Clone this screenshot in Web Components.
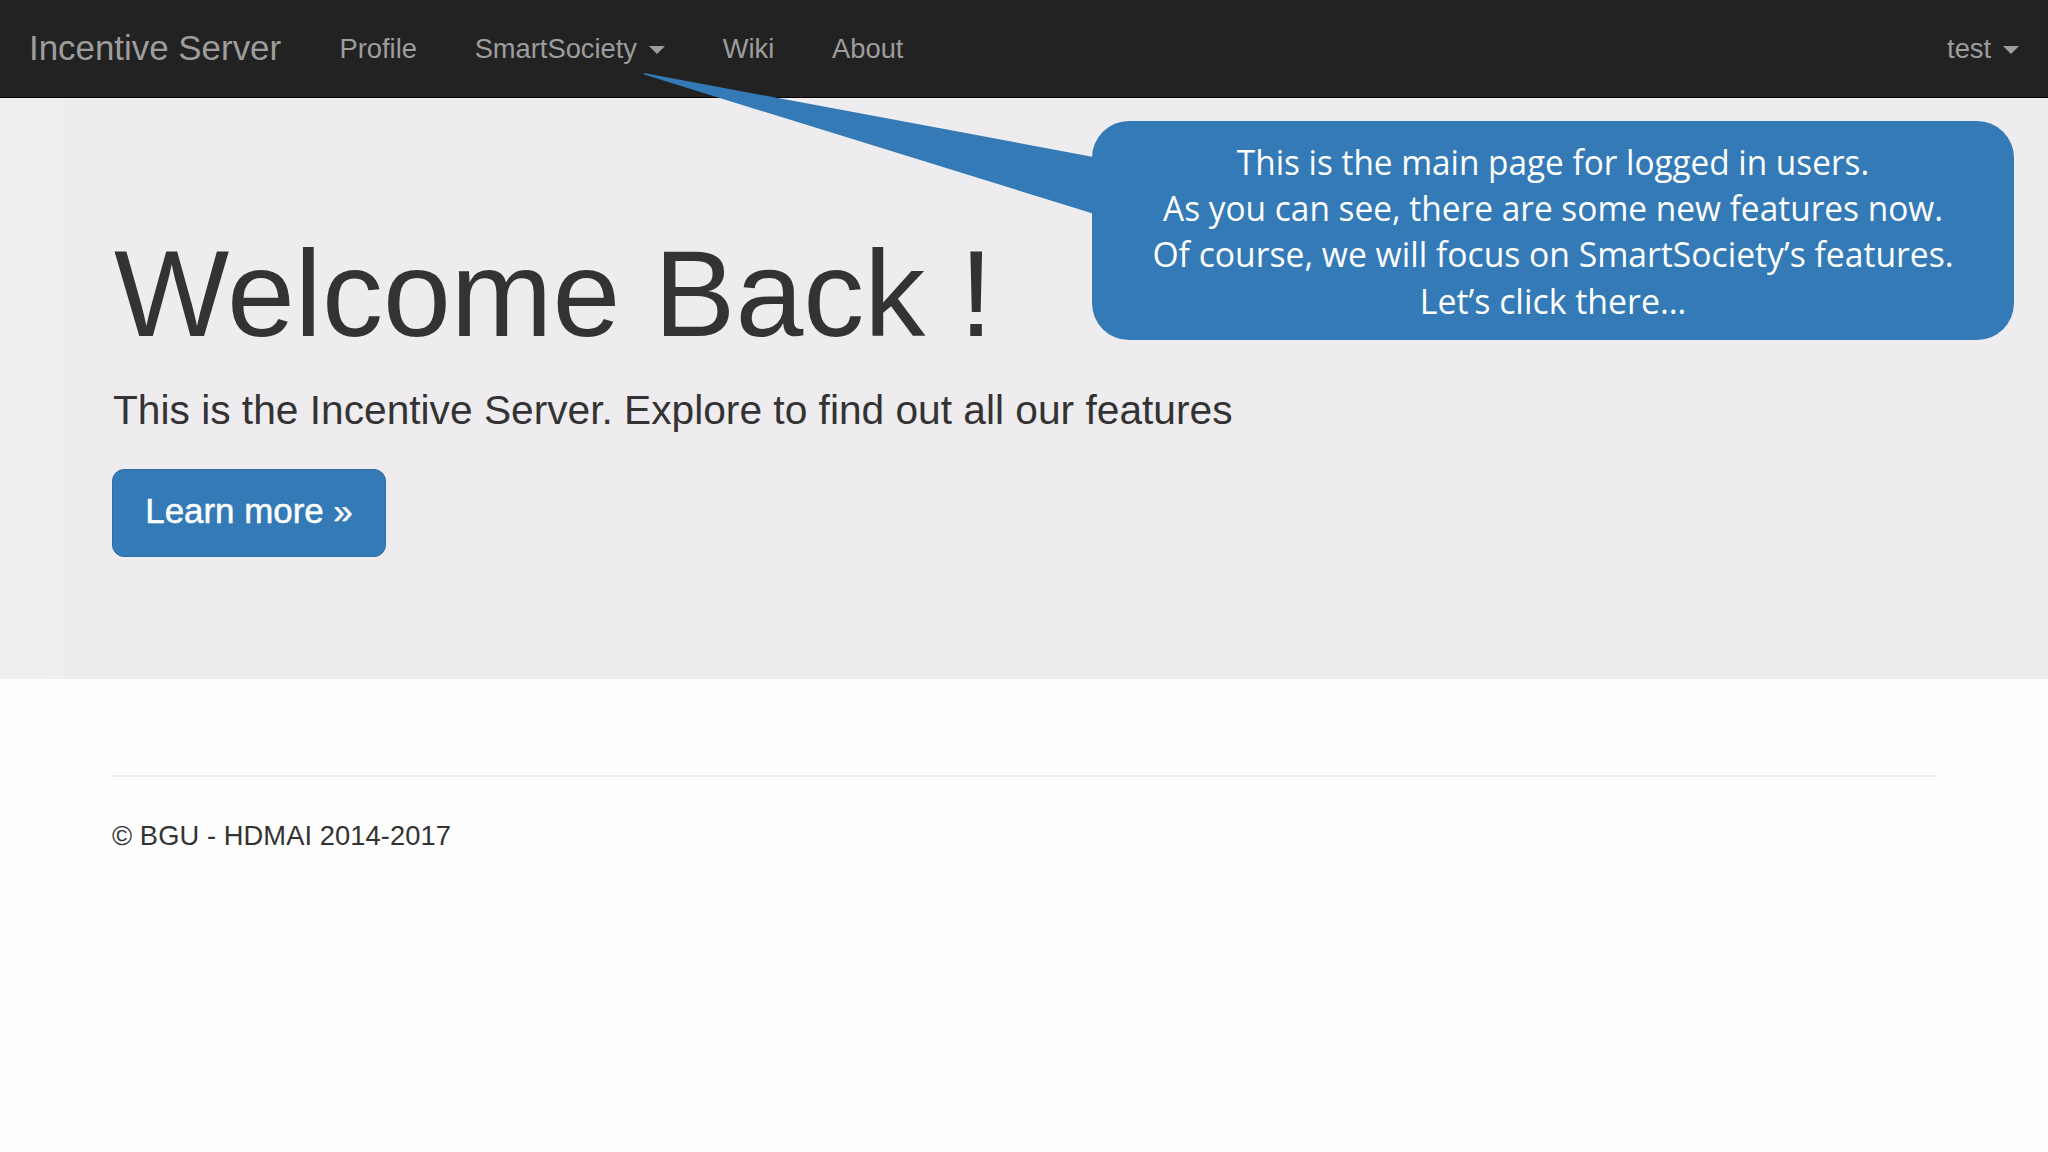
<!DOCTYPE html>
<html lang="en">
<head>
<meta charset="utf-8">
<title>Incentive Server</title>
<style>
    body {
        margin: 0;
        position: relative;
        min-height: 1152px;
        overflow: hidden;
        background: #fefefe;
        color: #333;
        font-family: "Liberation Sans", Arial, sans-serif;
        font-size: 27.3px;
    }
</style>
</head>
<body>
    <nav-bar brand="Incentive Server">
        <nav-item>Profile</nav-item>
        <nav-item dropdown>SmartSociety</nav-item>
        <nav-item>Wiki</nav-item>
        <nav-item>About</nav-item>
        <nav-item slot="right" dropdown>test</nav-item>
    </nav-bar>

    <jumbo-tron>
        <span slot="title">Welcome Back !</span>
        <span slot="lead">This is the Incentive Server. Explore to find out all our features</span>
        <primary-button slot="action">Learn more »</primary-button>
    </jumbo-tron>

    <page-footer>© BGU - HDMAI 2014-2017</page-footer>

    <call-out>
        <callout-line style="--stretch: 0.952">This is the main page for logged in users.</callout-line>
        <callout-line style="--stretch: 0.955">As you can see, there are some new features now.</callout-line>
        <callout-line style="--stretch: 0.962">Of course, we will focus on SmartSociety’s features.</callout-line>
        <callout-line style="--stretch: 0.967">Let’s click there…</callout-line>
    </call-out>

<script>
class NavBar extends HTMLElement {
    constructor() {
        super();
        this.attachShadow({ mode: "open" });

        this.shadowRoot.innerHTML = `
            <style>
                :host {
                    display: block;
                    color: #9d9d9d;
                }
                nav {
                    display: flex;
                    align-items: center;
                    box-sizing: border-box;
                    height: 98px;
                    background: #222;
                    border-bottom: 1px solid #000;
                }
                .brand {
                    padding: 0 29.5px 2px 29px;
                    font-size: 34.9px;
                }
                .links {
                    display: flex;
                    flex: 1;
                }
            </style>
            <nav>
                <div class="brand">${this.getAttribute('brand')}</div>
                <div class="links"><slot></slot></div>
                <slot name="right"></slot>
            </nav>
        `;
    }
}

class NavItem extends HTMLElement {
    constructor() {
        super();
        this.attachShadow({ mode: "open" });

        this.shadowRoot.innerHTML = `
            <style>
                :host {
                    display: flex;
                    align-items: center;
                    padding: 0 28.9px;
                    line-height: 39px;
                }
                .caret {
                    display: none;
                    margin: 3px 0 0 12px;
                    border-top: 8px solid;
                    border-left: 8px solid transparent;
                    border-right: 8px solid transparent;
                }
                :host([dropdown]) .caret {
                    display: block;
                }
            </style>
            <slot></slot><span class="caret"></span>
        `;
    }
}

class JumboTron extends HTMLElement {
    constructor() {
        super();
        this.attachShadow({ mode: "open" });

        this.shadowRoot.innerHTML = `
            <style>
                :host {
                    display: block;
                    box-sizing: border-box;
                    height: 581px;
                    padding: 129px 112px 0;
                    background: linear-gradient(to right, #eeefee 44px, #eeecef 68px);
                }
                h1 {
                    margin: 0;
                    font-size: 122px;
                    font-weight: 500;
                    line-height: 134px;
                    text-indent: 2px;
                }
                p {
                    margin: 20px 0 30px;
                    font-size: 40.7px;
                    line-height: 58px;
                    text-indent: 1px;
                }
            </style>
            <h1><slot name="title"></slot></h1>
            <p><slot name="lead"></slot></p>
            <slot name="action"></slot>
        `;
    }
}

class PrimaryButton extends HTMLElement {
    constructor() {
        super();
        this.attachShadow({ mode: "open" });

        this.shadowRoot.innerHTML = `
            <style>
                :host {
                    display: block;
                    text-indent: 0;
                }
                button {
                    box-sizing: border-box;
                    width: 274px;
                    height: 88px;
                    padding: 0 0 4px;
                    color: #fff;
                    background: #337ab7;
                    border: 1px solid #2e6da4;
                    border-radius: 12px;
                    font: inherit;
                    font-size: 34.9px;
                    -webkit-text-stroke: 0.5px #fff;
                }
            </style>
            <button type="button"><slot></slot></button>
        `;
    }
}

class PageFooter extends HTMLElement {
    constructor() {
        super();
        this.attachShadow({ mode: "open" });

        this.shadowRoot.innerHTML = `
            <style>
                :host {
                    display: block;
                    padding: 96px 112px 0;
                }
                hr {
                    margin: 0 0 39px;
                    border: 0;
                    border-top: 2px solid #eeecef;
                }
                p {
                    margin: 0;
                    line-height: 39px;
                    letter-spacing: 0.08px;
                }
            </style>
            <hr>
            <p><slot></slot></p>
        `;
    }
}

class CallOut extends HTMLElement {
    constructor() {
        super();
        this.attachShadow({ mode: "open" });

        this.shadowRoot.innerHTML = `
            <style>
                :host {
                    display: block;
                    position: absolute;
                    left: 1092px;
                    top: 121px;
                    width: 922px;
                    height: 219px;
                }
                .box {
                    box-sizing: border-box;
                    height: 100%;
                    padding-top: 18px;
                    border-radius: 37px;
                    background: #337ab7;
                    color: #fff;
                }
                svg {
                    position: absolute;
                    left: -449px;
                    top: -49px;
                }
            </style>
            <svg width="452" height="143" viewBox="0 0 452 143">
                <path d="M1 1 L449 84.7 H452 V142 L449 141.3 L1 2.5 Z" fill="#337ab7"/>
            </svg>
            <div class="box"><slot></slot></div>
        `;
    }
}

class CalloutLine extends HTMLElement {
    constructor() {
        super();
        this.attachShadow({ mode: "open" });

        this.shadowRoot.innerHTML = `
            <style>
                :host {
                    display: block;
                    font-family: "Open Sans", "Noto Sans", sans-serif;
                    font-size: 35px;
                    line-height: 46.2px;
                    text-align: center;
                    white-space: nowrap;
                    transform: scaleX(var(--stretch, 0.96));
                }
            </style>
            <slot></slot>
        `;
    }
}

customElements.define('nav-bar', NavBar);
customElements.define('nav-item', NavItem);
customElements.define('jumbo-tron', JumboTron);
customElements.define('primary-button', PrimaryButton);
customElements.define('page-footer', PageFooter);
customElements.define('call-out', CallOut);
customElements.define('callout-line', CalloutLine);
</script>
</body>
</html>
